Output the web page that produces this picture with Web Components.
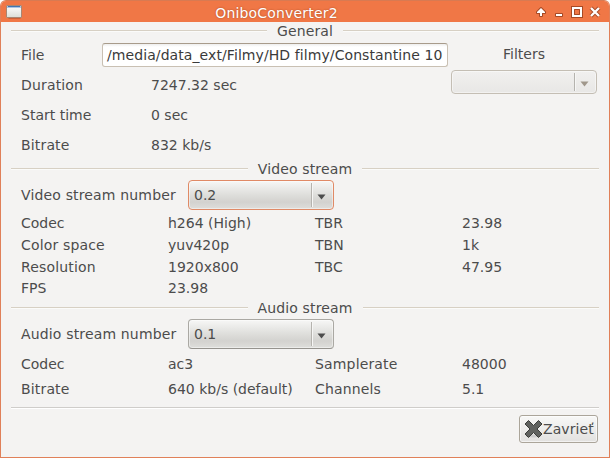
<!DOCTYPE html>
<html lang="sk">
<head>
<meta charset="utf-8">
<title>OniboConverter2</title>
<style>
html,body{margin:0;background:#fff}
body{width:610px;height:458px;overflow:hidden;font:14px/20px "DejaVu Sans",sans-serif;color:#4c4c4c}
.general{display:flex;height:120px}
.facts{flex:none;width:440px}
.filters{display:flex;flex-direction:column;align-items:center;width:146px}
.filters span{height:30px;line-height:28px}
.wide{letter-spacing:.16px}
.bar{display:flex;justify-content:flex-end;padding:7px 1px 0 0}
</style>
</head>
<body>
<app-window heading="OniboConverter2">
  <section-title>General</section-title>
  <div class="general">
    <div class="facts">
      <info-row cols="81px 1fr" h="30"><span>File</span><text-entry>/media/data_ext/Filmy/HD filmy/Constantine 10</text-entry></info-row>
      <info-row cols="130px 1fr" h="30"><span class="wide">Duration</span><span>7247.32 sec</span></info-row>
      <info-row cols="130px 1fr" h="30"><span>Start time</span><span>0 sec</span></info-row>
      <info-row cols="130px 1fr" h="30"><span class="wide">Bitrate</span><span>832 kb/s</span></info-row>
    </div>
    <div class="filters"><span>Filters</span><combo-box disabled></combo-box></div>
  </div>
  <section-title>Video stream</section-title>
  <info-row cols="167px 1fr" h="34"><span class="wide">Video stream number</span><combo-box focused>0.2</combo-box></info-row>
  <info-row h="22"><span>Codec</span><span>h264 (High)</span><span>TBR</span><span>23.98</span></info-row>
  <info-row h="22"><span class="wide">Color space</span><span>yuv420p</span><span>TBN</span><span>1k</span></info-row>
  <info-row h="22"><span class="wide">Resolution</span><span>1920x800</span><span>TBC</span><span>47.95</span></info-row>
  <info-row h="20"><span>FPS</span><span>23.98</span></info-row>
  <section-title class="last">Audio stream</section-title>
  <info-row cols="167px 1fr" h="34"><span class="wide">Audio stream number</span><combo-box>0.1</combo-box></info-row>
  <info-row h="25"><span>Codec</span><span>ac3</span><span class="wide">Samplerate</span><span>48000</span></info-row>
  <info-row h="25"><span class="wide">Bitrate</span><span>640 kb/s (default)</span><span class="wide">Channels</span><span>5.1</span></info-row>
  <rule-line></rule-line>
  <div class="bar"><close-button>Zavrieť</close-button></div>
</app-window>
<script>
const define = (name, html, setup) => customElements.define(name, class extends HTMLElement {
  connectedCallback() {
    if (this.shadowRoot) return;
    this.attachShadow({mode: 'open'}).innerHTML = html;
    if (setup) setup(this, this.shadowRoot);
  }
});

define('app-window', `<style>
:host{display:flex;flex-direction:column;box-sizing:border-box;width:610px;height:458px;border:1px solid #e08059;border-top-color:#d87a52;border-radius:6px 6px 0 0;background:#f4f3f2;overflow:hidden}
header{flex:none;display:grid;grid-template-columns:80px 1fr 80px;align-items:center;height:21px;background:#f07746;color:#fff}
h1{margin:0;font:inherit;letter-spacing:.18px;text-align:center;padding:4px 57px 0 0;height:17px;line-height:17px;text-shadow:0 0 2px #a34a25}
.app{margin-left:5px;display:block}
.ctl{display:block;justify-self:end}
main{flex:1;padding:0 10px}
</style>
<header>
<svg class="app" width="18" height="16" viewBox="0 0 18 16"><defs><linearGradient id="g" x2="0" y2="1"><stop offset="0" stop-color="#fff"/><stop offset="1" stop-color="#dcded6"/></linearGradient></defs><path d="M1 13h15l-2 2H3z" fill="#b6532c" opacity=".6"/><rect x=".5" y="1.5" width="15" height="12" rx=".5" fill="url(#g)" stroke="#a98672"/><path d="M1 2h14v2H1z" fill="#aac4e3"/><path d="M2 2h12v1H2z" fill="#4475b0"/></svg>
<h1></h1>
<svg class="ctl" width="76" height="16" viewBox="533 4 76 16"><g stroke="#a64a27" stroke-width="2" stroke-linejoin="round" fill="#a64a27"><path d="M541 8l4 4v1h-3v3h-2v-3h-3v-1z"/><path d="M556 14h6v2h-6z"/><path d="M573 8h8v8h-8z" fill="none" stroke-width="4" stroke-linejoin="miter"/><path d="M591 8l8 8m0-8l-8 8" stroke-width="4"/></g><path d="M541 8l4 4v1h-3v3h-2v-3h-3v-1zM556 14h6v2h-6z" fill="#fff"/><path d="M573 8h8v8h-8z" fill="#f07746" stroke="#fff" stroke-width="2"/><path d="M574.5 9.500h5v5h-5z" fill="none" stroke="#a64a27"/><path d="M591 8l8 8m0-8l-8 8" stroke="#fff" stroke-width="2.300"/></svg>
</header><main><slot></slot></main>`, (el, root) => { root.querySelector('h1').textContent = el.getAttribute('heading'); });

define('section-title', `<style>
:host{display:flex;gap:10px;height:18px;line-height:18px;letter-spacing:.14px}
:host(.last){padding-top:1px}
i{flex:1;height:1px;margin-top:8px;background:#d7d0c4;box-shadow:0 1px #fbfbfa}
</style><i></i><slot></slot><i></i>`);

define('info-row', `<style>
:host{display:grid;align-items:center;padding-left:10px}
</style><slot></slot>`, el => {
  el.style.gridTemplateColumns = el.getAttribute('cols') || 'repeat(4, 147px)';
  el.style.height = el.getAttribute('h') + 'px';
});

define('text-entry', `<style>
:host{display:block;box-sizing:border-box;width:346px;height:24px;line-height:22px;padding-left:4px;border:1px solid #c9c0b3;border-top-color:#a89b8b;border-radius:3px;background:linear-gradient(#eee,#fff 3px);color:#3a3a3a;white-space:nowrap;overflow:hidden;letter-spacing:.085px}
</style><slot></slot>`);

define('combo-box', `<style>
:host{display:flex;align-items:center;box-sizing:border-box;width:146px;height:30px;padding-left:5px;border:1px solid #aaa8a3;border-bottom-color:#95938e;border-radius:4px;background:linear-gradient(#f7f7f6,#dededb 50%,#d3d2cf 75%,#dededb);box-shadow:inset 0 0 0 1px #ffffff70}
:host([focused]){border-color:#e08a66}
:host([disabled]){height:24px;border-color:#c4beb4;background:linear-gradient(#f1f0ef,#e8e7e5);--arrow:#a0978b}
b{margin-left:auto;width:1px;height:calc(100% - 4px);background:#b5b3ae;box-shadow:1px 0 #f6f6f5}
svg{display:block;margin:4px 7px 0 5px}
</style><slot></slot><b></b><svg width="9" height="6" viewBox="0 0 9 6"><path d="M.5.500h8L4.500 5.500z" fill="var(--arrow,#4c4c4c)"/></svg>`);

define('rule-line', `<style>:host{display:block;height:1px;margin-top:6px;background:#cfcdca;box-shadow:0 1px #fff}</style>`);

define('close-button', `<style>
:host{display:flex;align-items:center;box-sizing:border-box;width:79px;height:28px;padding-left:4px;border:1px solid #aba59a;border-radius:3px;background:linear-gradient(#f8f8f7,#e2e1df);box-shadow:inset 0 0 0 1px #ffffff90;white-space:nowrap;letter-spacing:.1px}
svg{flex:none}
</style><svg width="19" height="20" viewBox="0 0 19 20"><ellipse cx="9.500" cy="17" rx="8" ry="1.500" fill="#ccc"/><path d="M4.500 1.500L9.500 6.500 14.500 1.500 18 5 13 10 18 15 14.500 18.500 9.500 13.500 4.500 18.500 1 15 6 10 1 5z" fill="#60625f" stroke="#3c3e3b" stroke-linejoin="round"/></svg><slot></slot>`);
</script>
</body>
</html>
